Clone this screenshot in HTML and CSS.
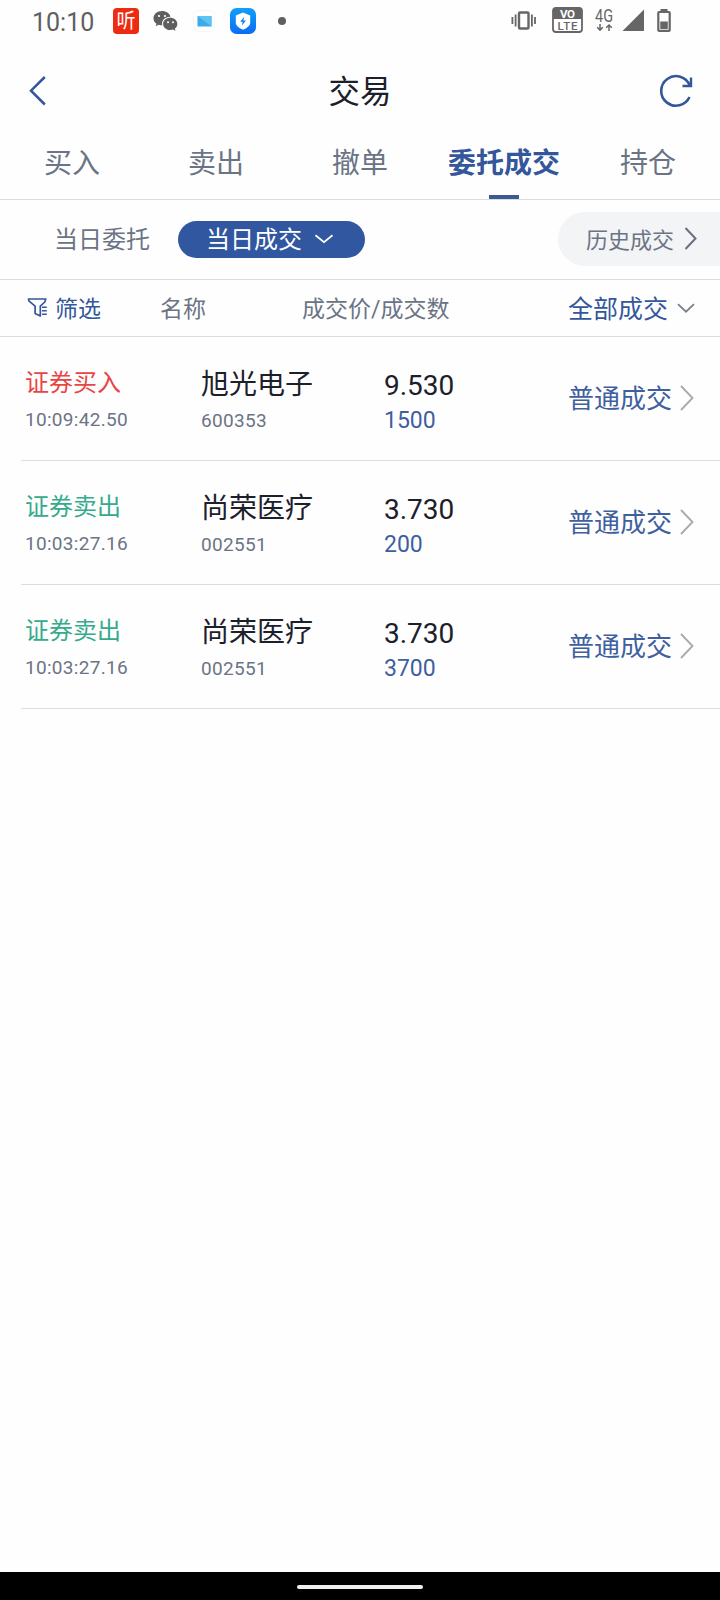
FILE: index.html
```
<!DOCTYPE html>
<html lang="zh-CN">
<head>
    <meta charset="UTF-8">
    <meta name="viewport" content="width=device-width, initial-scale=1.0">
    <title>交易</title>
    <link rel="stylesheet" href="styles.css">
</head>
<body>
    <div class="status-bar">
        <span class="clock">10:10</span>
        <svg class="app-icons" width="180" height="42" viewBox="108 0 180 42">
            <defs>
                <linearGradient id="shieldBg" x1="0" y1="0" x2="0" y2="1">
                    <stop offset="0" stop-color="#10a0fa"/>
                    <stop offset="1" stop-color="#0b6df2"/>
                </linearGradient>
            </defs>
            <rect x="113" y="8" width="26" height="26" rx="4" fill="#ee2a10"/>
            <text class="app-char" x="126" y="28" text-anchor="middle" textLength="19" lengthAdjust="spacingAndGlyphs">听</text>
            <!-- chat bubbles -->
            <path d="M162 11c-5 0-8.500 3.200-8.500 7.200 0 2.300 1.200 4.200 3 5.500l-.8 2.600 3-1.500c1.200.4 2.200.5 3.600.5-1.300-5 3-8.800 8.200-8.600C169.700 13.300 166.200 11 162 11z" fill="#5f5f5f"/>
            <path d="M170.300 17.800c-4 0-7.200 2.700-7.200 6.100s3.200 6.100 7.200 6.100c1 0 1.900-.2 2.700-.4l2.500 1.300-.7-2.200c1.500-1.200 2.500-2.900 2.500-4.800 0-3.400-3.100-6.100-7-6.100z" fill="#5f5f5f"/>
            <g fill="#fff">
                <circle cx="159" cy="16" r="1.100"/><circle cx="165" cy="16" r="1.100"/>
                <circle cx="168" cy="22.200" r="1"/><circle cx="173" cy="22.200" r="1"/>
            </g>
            <rect x="193.500" y="10.500" width="21" height="21" rx="4" fill="#fefefe" stroke="#f6f6f6"/>
            <rect x="197.500" y="16" width="14" height="10.500" fill="#39abe8"/>
            <path d="M197.500 16h14v10.500z" fill="#5fc2f4"/>
            <rect x="230" y="8" width="26" height="26" rx="6.500" fill="url(#shieldBg)"/>
            <path d="M243 12.500l7.200 3v7.500c0 3-3.700 5-7.200 6.800-3.500-1.800-7.200-3.800-7.200-6.800v-7.500z" fill="#fff"/>
            <path d="M244 17l-3.800 4.800h2.400l-.6 3.800 3.900-5h-2.500z" fill="#0b80f5"/>
            <circle cx="282" cy="21" r="4" fill="#5f5f5f"/>
        </svg>
        <svg class="system-icons" width="170" height="42" viewBox="506 0 170 42">
            <!-- vibrate -->
            <g fill="none" stroke="#666" stroke-width="1.800">
                <rect x="519" y="12.500" width="9.500" height="16" rx="1" stroke-width="2.400"/>
                <path d="M515.600 14.500v12M512.400 17v7M531.900 14.500v12M535 17v7"/>
            </g>
            <rect x="553" y="8" width="29" height="24" rx="3" fill="#fff" stroke="#666" stroke-width="1.800"/>
            <path d="M553 8h29v11h-29z" fill="#666"/>
            <text class="volte vo" x="567.500" y="17.700" text-anchor="middle" textLength="15" lengthAdjust="spacing">VO</text>
            <text class="volte lte" x="567.500" y="30.300" text-anchor="middle" textLength="20">LTE</text>
            <text class="net" x="595" y="22" textLength="18" lengthAdjust="spacingAndGlyphs">4G</text>
            <path d="M600 24v6M597.200 27.300l2.800 2.800 2.800-2.800M609 31v-6M606.200 27.800l2.800-2.800 2.800 2.800" fill="none" stroke="#666" stroke-width="1.500"/>
            <path d="M622.500 31L644 9.500V31z" fill="#666"/>
            <rect x="658.300" y="12" width="11.400" height="18.800" rx=".8" fill="none" stroke="#666" stroke-width="2.200"/>
            <rect x="660.500" y="9" width="7" height="2.500" fill="#666"/>
            <rect x="660.300" y="21.500" width="7.500" height="7.500" fill="#666"/>
        </svg>
    </div>

    <div class="header">
        <svg class="back" width="20" height="32" viewBox="0 0 20 32">
            <path d="M16.800 2L3 15.700l13.800 13.800" fill="none" stroke="#34579b" stroke-width="2.500"/>
        </svg>
        <h1>交易</h1>
        <svg class="refresh" width="36" height="36" viewBox="658 73 36 36">
            <path d="M689.500 97A14.800 14.800 0 1 1 689.800 85.500" fill="none" stroke="#34579b" stroke-width="2.600"/>
            <path d="M691 77.500V86h-8.500" fill="none" stroke="#34579b" stroke-width="2.400"/>
        </svg>
    </div>

    <div class="tabs">
        <div class="tab">买入</div>
        <div class="tab">卖出</div>
        <div class="tab">撤单</div>
        <div class="tab active">委托成交</div>
        <div class="tab">持仓</div>
    </div>

    <div class="subtabs">
        <span class="today-orders">当日委托</span>
        <div class="today-deals">
            当日成交
            <svg width="20" height="12" viewBox="0 0 20 12"><path d="M1.500 2.200L10 9.200l8.500-7" fill="none" stroke="#fff" stroke-width="1.800"/></svg>
        </div>
        <div class="history">
            历史成交
            <svg width="14" height="24" viewBox="0 0 14 24"><path d="M1.500 2L11.500 12.500 1.500 23" fill="none" stroke="#66707f" stroke-width="2"/></svg>
        </div>
    </div>

    <div class="columns">
        <div class="filter">
            <svg width="20" height="22" viewBox="27 296 20 22">
                <path d="M28.500 299h17.300l-1 3-4.500 4.200V316l-5.200-2.500v-7.300l-6-5z" fill="none" stroke="#34579b" stroke-width="1.700" stroke-linejoin="round"/>
                <path d="M42 307.200h4.800M42 310.700h4.800M42 314.200h4.800" stroke="#34579b" stroke-width="1.600"/>
            </svg>
            筛选
        </div>
        <span class="col-name">名称</span>
        <span class="col-price">成交价/成交数</span>
        <div class="col-type">
            全部成交
            <svg width="18" height="12" viewBox="0 0 18 12"><path d="M1 2.200l8 7.500 8-7.500" fill="none" stroke="#78808d" stroke-width="1.800"/></svg>
        </div>
    </div>

    <div class="list">
        <div class="row">
            <div class="cell">
                <div class="side buy">证券买入</div>
                <div class="time">10:09:42.50</div>
            </div>
            <div class="cell">
                <div class="stock">旭光电子</div>
                <div class="code">600353</div>
            </div>
            <div class="cell">
                <div class="price">9.530</div>
                <div class="amount">1500</div>
            </div>
            <div class="type">
                普通成交
                <svg width="14" height="26" viewBox="0 0 14 26"><path d="M1 1l11.500 12L1 25" fill="none" stroke="#a8abb2" stroke-width="1.900"/></svg>
            </div>
        </div>
        <div class="row">
            <div class="cell">
                <div class="side sell">证券卖出</div>
                <div class="time">10:03:27.16</div>
            </div>
            <div class="cell">
                <div class="stock">尚荣医疗</div>
                <div class="code">002551</div>
            </div>
            <div class="cell">
                <div class="price">3.730</div>
                <div class="amount">200</div>
            </div>
            <div class="type">
                普通成交
                <svg width="14" height="26" viewBox="0 0 14 26"><path d="M1 1l11.500 12L1 25" fill="none" stroke="#a8abb2" stroke-width="1.900"/></svg>
            </div>
        </div>
        <div class="row">
            <div class="cell">
                <div class="side sell">证券卖出</div>
                <div class="time">10:03:27.16</div>
            </div>
            <div class="cell">
                <div class="stock">尚荣医疗</div>
                <div class="code">002551</div>
            </div>
            <div class="cell">
                <div class="price">3.730</div>
                <div class="amount">3700</div>
            </div>
            <div class="type">
                普通成交
                <svg width="14" height="26" viewBox="0 0 14 26"><path d="M1 1l11.500 12L1 25" fill="none" stroke="#a8abb2" stroke-width="1.900"/></svg>
            </div>
        </div>
    </div>

    <div class="nav-bar"><div class="handle"></div></div>
</body>
</html>
```

FILE: styles.css
```
* {
    box-sizing: border-box;
}
body {
    margin: 0;
    height: 1600px;
    display: flex;
    flex-direction: column;
    background: #fefefe;
    font-family: Roboto, "Noto Sans CJK SC", sans-serif;
    color: #6b7485;
    white-space: nowrap;
    overflow: hidden;
}
svg {
    display: block;
    flex: none;
}

/* status bar */
.status-bar {
    height: 42px;
    display: flex;
    padding-left: 32px;
}
.clock {
    width: 76px;
    font-size: 25px;
    line-height: 46px;
    color: #5f5f5f;
}
.system-icons {
    margin-left: auto;
    margin-right: 44px;
}
.app-char {
    font: 20px "Noto Sans CJK SC", sans-serif;
    fill: #fff;
}
.volte {
    font-family: Roboto, sans-serif;
    font-size: 11.5px;
    font-weight: 700;
    fill: #fff;
}
.lte {
    font-weight: 500;
    fill: #666;
}
.net {
    font-family: Roboto, sans-serif;
    font-size: 18px;
    fill: #666;
}

/* header */
.header {
    height: 96px;
    padding: 1px 26px 0 28px;
    display: flex;
    align-items: center;
    justify-content: space-between;
}
.header h1 {
    margin: 0 0 3px 14px;
    font-size: 31.5px;
    font-weight: 400;
    color: #1c202b;
}

/* tabs */
.tabs {
    height: 62px;
    display: grid;
    grid-template-columns: repeat(5, 144px);
    border-bottom: 1px solid #dcdddf;
}
.tab {
    display: flex;
    flex-direction: column;
    align-items: center;
    font-size: 28px;
    line-height: 52px;
}
.tab.active {
    color: #34579b;
    font-weight: 700;
}
.tab.active::after {
    content: "";
    width: 30px;
    height: 4px;
    margin-top: 5px;
    background: #3c5a92;
}

/* sub tabs */
.subtabs {
    height: 80px;
    padding-left: 54px;
    display: flex;
    align-items: center;
    border-bottom: 1px solid #dcdddf;
    font-size: 24px;
}
.today-orders {
    padding-bottom: 4px;
}
.today-deals {
    width: 187px;
    height: 37px;
    margin-left: 28px;
    padding: 0 0 4px 28px;
    display: flex;
    align-items: center;
    gap: 12px;
    border-radius: 19px;
    background: #3057a0;
    color: #fff;
}
.today-deals svg {
    margin-top: 2px;
}
.history {
    width: 162px;
    height: 54px;
    margin: 0 0 2px auto;
    padding: 0 0 2px 28px;
    display: flex;
    align-items: center;
    gap: 10px;
    border-radius: 27px 0 0 27px;
    background: #f3f4f6;
    font-size: 22px;
}

/* column titles */
.columns {
    height: 57px;
    padding: 0 0 2px 27px;
    display: grid;
    grid-template-columns: 133px 142px 266px 1fr;
    align-items: center;
    border-bottom: 1px solid #dcdddf;
    font-size: 23px;
}
.filter, .col-type {
    display: flex;
    align-items: center;
    gap: 8px;
    color: #34579b;
}
.col-type {
    font-size: 25px;
    gap: 9px;
}
.col-type svg {
    margin-top: 2px;
}

/* deals */
.list {
    flex: 1;
    padding-left: 21px;
}
.row {
    height: 124px;
    padding-left: 4px;
    display: grid;
    grid-template-columns: 176px 183px 184px 1fr;
    border-bottom: 1px solid #dcdddf;
}
.side {
    margin-top: 30px;
    font-size: 24px;
    line-height: 32px;
}
.buy {
    color: #e84545;
}
.sell {
    color: #35ab8b;
}
.time, .code {
    margin-top: 8px;
    font-size: 19px;
    line-height: 26px;
    letter-spacing: 0.3px;
}
.stock {
    margin-top: 32px;
    font-size: 28px;
    line-height: 32px;
    color: #1c202b;
}
.code {
    margin-top: 7px;
}
.price {
    margin-top: 32px;
    font-size: 28px;
    line-height: 34px;
    color: #1c202b;
}
.amount {
    font-size: 23px;
    line-height: 36px;
    color: #3f5f9f;
}
.type {
    padding-bottom: 4px;
    display: flex;
    align-items: center;
    gap: 8px;
    font-size: 26px;
    color: #3f5f9f;
}
.type svg {
    margin-top: 2px;
}

.nav-bar {
    height: 28px;
    padding-top: 13px;
    background: #000;
}
.handle {
    width: 126px;
    height: 4px;
    margin: 0 auto;
    border-radius: 2px;
    background: #eef1f0;
}
```
